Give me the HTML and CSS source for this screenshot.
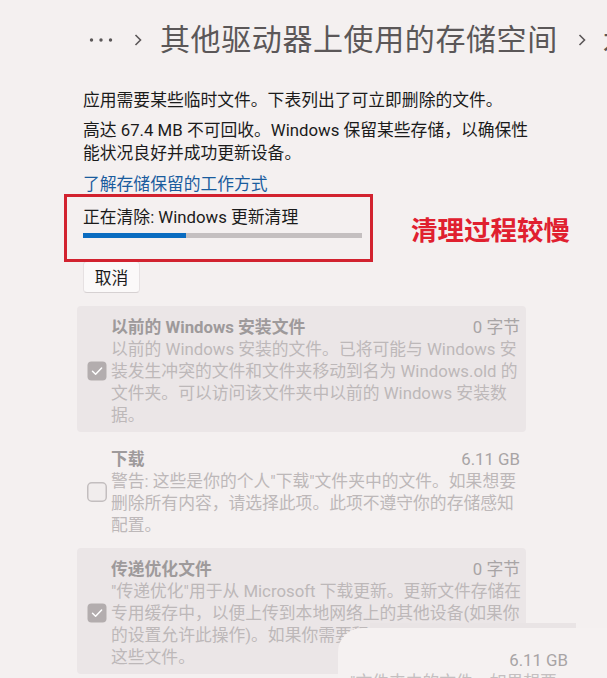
FILE: index.html
```html
<!DOCTYPE html>
<html lang="zh-CN">
<head>
    <meta charset="UTF-8">
    <meta name="viewport" content="width=device-width, initial-scale=1.0">
    <title>其他驱动器上使用的存储空间</title>
    <link rel="stylesheet" href="styles.css">
</head>
<body>
<div class="page">
    <header class="crumbs">
        <svg class="more" width="24" height="6" viewBox="0 0 24 6"><circle cx="2.5" cy="3" r="1.7"/><circle cx="12" cy="3" r="1.7"/><circle cx="21.5" cy="3" r="1.7"/></svg>
        <svg class="sep" width="8" height="14" viewBox="0 0 8 14"><path d="M1.5 2 L6.5 7 L1.5 12"/></svg>
        <h1>其他驱动器上使用的存储空间</h1>
        <svg class="sep" width="8" height="14" viewBox="0 0 8 14"><path d="M1.5 2 L6.5 7 L1.5 12"/></svg>
        <span class="cut">本</span>
    </header>

    <p class="intro">应用需要某些临时文件。下表列出了可立即删除的文件。</p>
    <p class="intro second">高达 67.4 MB 不可回收。Windows 保留某些存储，以确保性能状况良好并成功更新设备。</p>
    <a class="learn" href="#">了解存储保留的工作方式</a>

    <div class="progress-row">
        <div class="highlight">
            <div class="status">正在清除: Windows 更新清理</div>
            <div class="bar"><div class="bar-fill" style="width: 37%"></div></div>
        </div>
        <div class="note">清理过程较慢</div>
    </div>
    <button class="cancel">取消</button>

    <div class="items">
        <div class="item checked">
            <svg class="box" width="20" height="20" viewBox="0 0 20 20"><rect x="0.5" y="0.5" width="19" height="19" rx="4" class="box-on"/><path d="M5.5 10.3 L8.6 13.3 L14.6 7" class="tick"/></svg>
            <div class="item-body">
                <div class="item-head"><span class="item-title">以前的 Windows 安装文件</span><span class="item-size">0 字节</span></div>
                <div class="item-desc">以前的 Windows 安装的文件。已将可能与 Windows 安装发生冲突的文件和文件夹移动到名为 Windows.old 的文件夹。可以访问该文件夹中以前的 Windows 安装数据。</div>
            </div>
        </div>
        <div class="item">
            <svg class="box" width="20" height="20" viewBox="0 0 20 20"><rect x="0.75" y="0.75" width="18.5" height="18.5" rx="4" class="box-off"/></svg>
            <div class="item-body">
                <div class="item-head"><span class="item-title">下载</span><span class="item-size">6.11 GB</span></div>
                <div class="item-desc">警告: 这些是你的个人"下载"文件夹中的文件。如果想要删除所有内容，请选择此项。此项不遵守你的存储感知配置。</div>
            </div>
        </div>
        <div class="item checked">
            <svg class="box" width="20" height="20" viewBox="0 0 20 20"><rect x="0.5" y="0.5" width="19" height="19" rx="4" class="box-on"/><path d="M5.5 10.3 L8.6 13.3 L14.6 7" class="tick"/></svg>
            <div class="item-body">
                <div class="item-head"><span class="item-title">传递优化文件</span><span class="item-size">0 字节</span></div>
                <div class="item-desc">"传递优化"用于从 Microsoft 下载更新。更新文件存储在专用缓存中，以便上传到本地网络上的其他设备(如果你的设置允许此操作)。如果你需要释放空间，你可以删除这些文件。</div>
            </div>
        </div>
    </div>

    <!-- 截图里叠在右下角的残影 -->
    <div class="ghost-strip"></div>
    <div class="ghost">
        <div class="ghost-size">6.11 GB</div>
        <div class="ghost-text">"文件夹中的文件。如果想要</div>
    </div>
</div>
</body>
</html>
```

FILE: styles.css
```css
body {
    margin: 0;
    background-color: #f4f0f0;
    font-family: Roboto, "Noto Sans CJK SC", sans-serif;
    color: #1b1b1b;
    overflow: hidden;
}
.page {
    position: relative;
    height: 678px;
    box-sizing: border-box;
    padding: 20px 0 0 83px;
    overflow: hidden;
}
.crumbs {
    display: flex;
    align-items: center;
    height: 40px;
    margin-left: 6px;
    white-space: nowrap;
    color: #5b5758;
}
.crumbs svg {
    flex: none;
}
.crumbs h1 {
    flex: none;
    margin: 0 20px 0 18px;
    font-size: 30px;
    font-weight: 400;
    letter-spacing: 0.6px;
    line-height: 40px;
}
.more {
    fill: #5b5758;
    margin-right: 21px;
}
.sep path {
    fill: none;
    stroke: #5b5758;
    stroke-width: 1.6;
}
.cut {
    flex: none;
    margin-left: 17px;
    font-size: 30px;
}
.intro {
    width: 455px;
    margin: 29px 0 0;
    font-size: 16.8px;
    line-height: 23px;
}
.intro.second {
    margin-top: 7px;
}
.learn {
    display: block;
    margin-top: 8px;
    font-size: 16.8px;
    line-height: 23px;
    color: #1a5c9e;
    text-decoration: none;
}
.progress-row {
    display: flex;
    align-items: center;
    gap: 38px;
    margin-top: -2px;
}
.highlight {
    width: 279px;
    margin-left: -19px;
    padding: 9px 8px 21px 16px;
    border: 3px solid #d2222f;
}
.status {
    font-size: 16.8px;
    line-height: 22px;
}
.bar {
    width: 279px;
    height: 5px;
    margin-top: 5px;
    background-color: #c4bfc0;
}
.bar-fill {
    height: 100%;
    background-color: #0a6cc0;
}
.note {
    font-family: "Noto Sans CJK SC", sans-serif;
    font-size: 26.5px;
    font-weight: 700;
    color: #e0202f;
}
.cancel {
    display: block;
    width: 57px;
    height: 32px;
    margin-top: -1px;
    padding: 0;
    font-family: "Noto Sans CJK SC", sans-serif;
    font-size: 16.8px;
    color: #1b1b1b;
    background-color: #fbf9f9;
    border: 1px solid #e6e1e2;
    border-bottom-color: #d6d1d2;
    border-radius: 4px;
}
.items {
    display: flex;
    flex-direction: column;
    gap: 6px;
    width: 449px;
    margin: 13px 0 0 -6px;
}
.item {
    display: flex;
    align-items: center;
    gap: 4px;
    padding: 10px 3px 6px 10px;
    border-radius: 4px;
}
.item.checked {
    background-color: #ebe6e7;
}
.box {
    flex: none;
}
.box-on {
    fill: #b3adae;
}
.box-off {
    fill: #f1eded;
    stroke: #c3bebf;
    stroke-width: 1.5;
}
.tick {
    fill: none;
    stroke: #ffffff;
    stroke-width: 1.5;
    stroke-linecap: round;
    stroke-linejoin: round;
}
.item-body {
    flex: 1;
    min-width: 0;
}
.item-head {
    display: flex;
    justify-content: space-between;
    font-size: 16.8px;
    line-height: 22px;
}
.item-title {
    font-weight: 700;
    color: #9e9a9b;
}
.item-size {
    margin-right: 3px;
    color: #a8a4a5;
}
.item-desc {
    font-size: 16.8px;
    line-height: 22px;
    color: #bdb8b9;
}
.ghost-strip {
    position: absolute;
    left: 370px;
    top: 623px;
    width: 206px;
    height: 10px;
    background-color: #e9e4e5;
}
.ghost {
    position: absolute;
    left: 338px;
    top: 628px;
    width: 269px;
    height: 50px;
    box-sizing: border-box;
    padding: 21px 0 0 12px;
    background-color: #f5f1f1;
    border-top-left-radius: 24px;
    overflow: hidden;
}
.ghost-size {
    padding-right: 39px;
    text-align: right;
    font-size: 16.8px;
    line-height: 22px;
    color: #a8a4a5;
}
.ghost-text {
    font-size: 16.8px;
    line-height: 22px;
    color: #c4bfc0;
}
```
